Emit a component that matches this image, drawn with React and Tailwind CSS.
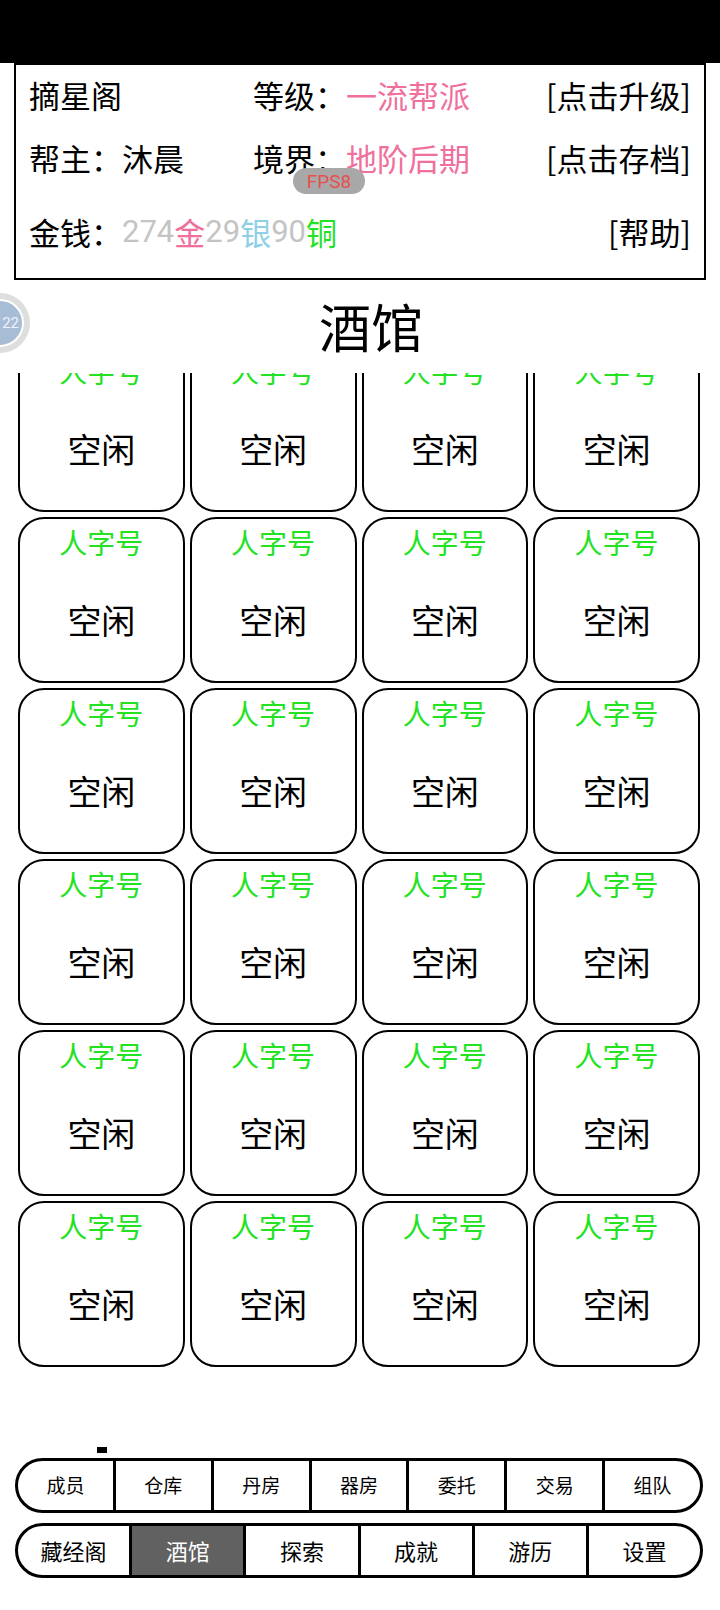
import React from 'react';

const font = { fontFamily: '"Noto Sans CJK SC", "Noto Sans", sans-serif' };
const digits = { fontFamily: 'Roboto, "Noto Sans CJK SC", sans-serif' };

const topTabs = ['成员', '仓库', '丹房', '器房', '委托', '交易', '组队'];
const bottomTabs = ['藏经阁', '酒馆', '探索', '成就', '游历', '设置'];

const Slot = () => (
    <div className="h-[166px] rounded-[26px] border-[2.5px] border-black bg-white flex flex-col items-center">
        <div className="mt-[6px] h-[34px] leading-[34px] text-[28px] text-[#22e222]">人字号</div>
        <div className="mt-[41px] h-[40px] leading-[40px] text-[34px] text-black">空闲</div>
    </div>
);

const App = () => {
    const slots = Array.from({ length: 24 });

    return (
        <div className="relative w-[720px] h-[1610px] bg-white overflow-hidden" style={font}>
            {/* status bar */}
            <div className="h-[63px] bg-black" />

            {/* sect info panel */}
            <div className="mx-[14px] h-[217px] border-2 border-black flex flex-col text-[31px] text-black">
                <div className="h-[60px] flex items-center px-[13px]">
                    <div className="w-[224px]">摘星阁</div>
                    <div>等级：</div>
                    <div className="text-[#ef6f9d]">一流帮派</div>
                    <div className="ml-auto">[点击升级]</div>
                </div>
                <div className="h-[66px] flex items-center px-[13px]">
                    <div className="w-[224px]">帮主：沐晨</div>
                    <div>境界：</div>
                    <div className="text-[#ef6f9d]">地阶后期</div>
                    <div className="ml-auto">[点击存档]</div>
                </div>
                <div className="h-[82px] flex items-center px-[13px]">
                    <div>金钱：</div>
                    <div className="flex">
                        <span className="text-[#c4c4c4]" style={digits}>274</span>
                        <span className="text-[#ef6f9d]">金</span>
                        <span className="text-[#c4c4c4]" style={digits}>29</span>
                        <span className="text-[#8ecfe6]">银</span>
                        <span className="text-[#c4c4c4]" style={digits}>90</span>
                        <span className="text-[#22e222]">铜</span>
                    </div>
                    <div className="ml-auto">[帮助]</div>
                </div>
            </div>

            {/* page title */}
            <div className="h-[93px] flex items-center justify-center pl-[22px] pb-[2px]">
                <div className="text-[52px] leading-none text-black">酒馆</div>
            </div>

            {/* slot grid, scrolled a little */}
            <div className="h-[1074px] overflow-hidden">
                <div className="-mt-[27px] grid grid-cols-4 gap-[5px] pl-[18px] pr-[20px]">
                    {slots.map((_, i) => (
                        <Slot key={i} />
                    ))}
                </div>
            </div>

            <div className="ml-[97px] w-[10px] h-[6px] bg-black" />

            {/* bottom navigation */}
            <div className="mt-[5px] ml-[15px] w-[688px] h-[55px] rounded-full border-[3px] border-black flex overflow-hidden text-[19px] text-black">
                {topTabs.map((t, i) => (
                    <div
                        key={t}
                        className={`flex-1 flex items-center justify-center ${i > 0 ? 'border-l-[3px] border-black' : ''}`}
                    >
                        {t}
                    </div>
                ))}
            </div>
            <div className="mt-[10px] ml-[15px] w-[688px] h-[55px] rounded-full border-[3px] border-black flex overflow-hidden text-[22px] text-black">
                {bottomTabs.map((t, i) => (
                    <div
                        key={t}
                        className={`flex-1 flex items-center justify-center ${i > 0 ? 'border-l-[3px] border-black' : ''} ${t === '酒馆' ? 'bg-[#616161] text-white' : ''}`}
                    >
                        {t}
                    </div>
                ))}
            </div>

            {/* FPS overlay */}
            <div className="absolute left-[293px] top-[168px] w-[72px] h-[26px] rounded-full bg-[#a8a8a8] flex items-center justify-center">
                <span className="text-[19px] leading-none text-[#e8504f]" style={digits}>FPS8</span>
            </div>

            {/* floating ball */}
            <div className="absolute left-[-30px] top-[293px] w-[60px] h-[60px] rounded-full bg-[#dedede] flex items-center justify-center">
                <div className="w-[48px] h-[48px] rounded-full border-2 border-white bg-[#a7bdd6] flex items-center justify-end pr-[3px]">
                    <span className="text-[15px] leading-none text-[#eef2f8]" style={digits}>22</span>
                </div>
            </div>
        </div>
    );
};

export default App;
